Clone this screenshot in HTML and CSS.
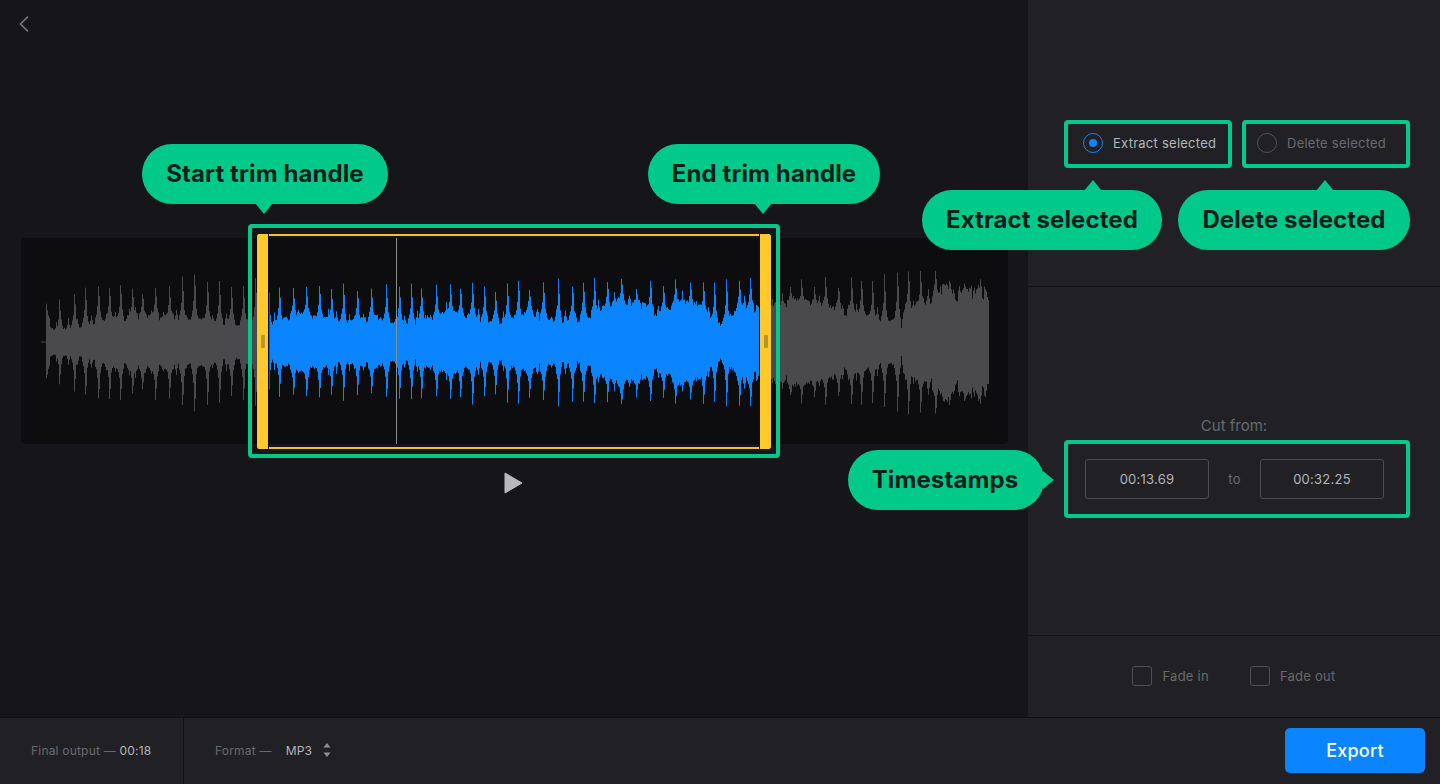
FILE: index.html
```html
<!DOCTYPE html>
<html lang="en">
<head>
    <meta charset="UTF-8">
    <title>Cut audio</title>
    <link rel="stylesheet" href="styles.css">
</head>
<body>
    <div class="app">
        <div class="workspace">
            <main class="editor">
                <a class="back" href="#">
                    <svg width="12" height="18" viewBox="0 0 12 18"><path d="M10 1.500 2.500 9l7.500 7.500"/></svg>
                </a>
                <div class="wave">
                    <svg class="wave-svg" width="987" height="206" viewBox="0 0 987 206">
                        <path id="wave-gray" class="wave-gray"/>
                        <path id="wave-blue" class="wave-blue"/>
                    </svg>
                    <div class="playhead"></div>
                    <div class="selection">
                        <div class="trim">
                            <div class="handle handle-left"><span class="grip"></span></div>
                            <div class="handle handle-right"><span class="grip"></span></div>
                        </div>
                    </div>
                </div>
                <button class="play">
                    <svg width="20" height="24" viewBox="0 0 20 24"><path d="M2 2v20l17-10z"/></svg>
                </button>
            </main>

            <aside class="sidebar">
                <section class="side-modes">
                    <label class="mode mode-on"><span class="radio radio-on"></span>Extract selected</label>
                    <label class="mode mode-off"><span class="radio"></span>Delete selected</label>
                </section>
                <section class="side-cut">
                    <div class="cut-label">Cut from:</div>
                    <div class="cut-box">
                        <div class="time">00:13.69</div>
                        <span class="cut-to">to</span>
                        <div class="time">00:32.25</div>
                    </div>
                </section>
                <section class="side-fade">
                    <label class="fade"><span class="check"></span>Fade in</label>
                    <label class="fade"><span class="check"></span>Fade out</label>
                </section>
            </aside>
        </div>

        <footer class="bottom">
            <div class="output">Final output — <b>00:18</b></div>
            <div class="format">
                <span>Format —</span>
                <b>MP3</b>
                <svg width="8" height="14" viewBox="0 0 8 14"><path d="M4 0 7.500 4.500H.5zM4 14 .5 9.500h7z"/></svg>
            </div>
            <button class="export">Export</button>
        </footer>

        <div class="callout callout-start arrow-down">Start trim handle</div>
        <div class="callout callout-end arrow-down">End trim handle</div>
        <div class="callout callout-extract arrow-up">Extract selected</div>
        <div class="callout callout-delete arrow-up">Delete selected</div>
        <div class="callout callout-stamps arrow-right">Timestamps</div>
    </div>

    <script src="waveform.js"></script>
</body>
</html>
```

FILE: styles.css
```css
* { box-sizing: border-box; }
body { margin: 0; background: #16161a; font-family: Inter, "Liberation Sans", sans-serif; font-size: 13px; letter-spacing: .25px; color: #b5b5b8; overflow: hidden; }
button { font-family: inherit; border: none; padding: 0; }

.app { position: relative; width: 1440px; height: 784px; display: flex; flex-direction: column; }
.workspace { flex: 1; display: flex; min-height: 0; }

/* left side */
.editor { flex: 1; padding: 0 20px 0 21px; display: flex; flex-direction: column; }
.back { display: block; height: 48px; padding-top: 15px; margin-left: -3px; }
.back svg { display: block; fill: none; stroke: #77777b; stroke-width: 1.7; }
.wave { position: relative; height: 206px; margin-top: 190px; background: #0d0d0f; border-radius: 4px; }
.wave-svg { display: block; }
.wave-gray { fill: none; stroke: #4a4a4c; stroke-width: 1; }
.wave-blue { fill: none; stroke: #0a84ff; stroke-width: 1; }
.playhead { position: absolute; left: 375px; top: 0; bottom: 0; width: 1px; background: #8b8b8e; }
.selection { position: absolute; left: 227px; top: -14px; width: 532px; height: 234px; border: 4px solid #00c98a; border-radius: 4px; padding: 6px 5px 5px; }
.trim { height: 100%; display: flex; justify-content: space-between; border-top: 2px solid #f0c030; border-bottom: 2px solid #f0c030; border-radius: 3px; }
.handle { width: 12px; margin: -2px 0; background: #ffca2a; display: flex; align-items: center; justify-content: center; }
.handle-left { border-radius: 3px 0 0 3px; border-right: 1px solid #0d0d0f; }
.handle-right { border-radius: 0 3px 3px 0; border-left: 1px solid #0d0d0f; }
.grip { width: 4px; height: 13px; border-radius: 1px; background: #b8962c; }
.play { align-self: center; margin: 27px 0 0 -3px; background: none; width: 20px; height: 24px; }
.play svg { display: block; fill: #b9b9bb; stroke: #b9b9bb; stroke-width: 1; stroke-linejoin: round; }

/* right side */
.sidebar { width: 412px; background: #212125; display: flex; flex-direction: column; }
.side-modes { height: 287px; padding: 120px 30px 0 36px; display: flex; gap: 10px; border-bottom: 1px solid #141417; }
.mode { width: 168px; height: 48px; border: 4px solid #00c98a; border-radius: 4px; padding: 0 0 2px 15px; display: flex; align-items: center; gap: 10px; color: #69696d; }
.mode-on { color: #b5b5b8; }
.mode-off { padding-left: 11px; }
.radio { width: 20px; height: 20px; border-radius: 50%; border: 1.5px solid #505054; }
.radio-on { border-color: #0a84ff; display: flex; align-items: center; justify-content: center; }
.radio-on::after { content: ""; width: 8px; height: 8px; border-radius: 50%; background: #0a84ff; }

.side-cut { height: 349px; padding: 130px 30px 0 36px; border-bottom: 1px solid #141417; }
.cut-label { height: 17px; margin-bottom: 6px; padding-right: 6px; font-size: 15px; line-height: 17px; letter-spacing: 0; text-align: center; color: #69696d; }
.cut-box { height: 78px; border: 4px solid #00c98a; border-radius: 4px; padding: 0 22px 0 17px; display: flex; align-items: center; justify-content: space-between; }
.time { width: 124px; height: 40px; border: 1px solid #4e4e52; border-radius: 3px; display: flex; align-items: center; justify-content: center; }
.cut-to { color: #69696d; }

.side-fade { flex: 1; display: flex; align-items: center; justify-content: center; gap: 41px; padding-bottom: 1px; color: #69696d; }
.fade { display: flex; align-items: center; gap: 10px; }
.check { width: 20px; height: 20px; border: 1.5px solid #505054; border-radius: 3px; }

/* bottom bar */
.bottom { height: 67px; background: #212125; border-top: 1px solid #111114; display: flex; align-items: center; font-size: 12px; letter-spacing: .2px; color: #69696d; }
.bottom b { font-weight: 400; color: #b5b5b8; }
.output { width: 184px; height: 100%; padding: 0 0 2px 31px; display: flex; align-items: center; white-space: pre; border-right: 1px solid #111114; }
.format { padding: 0 0 2px 31px; display: flex; align-items: center; }
.format b { margin-left: 14px; }
.format svg { margin-left: 11px; fill: #8f8f92; }
.export { margin: 0 15px 1px auto; width: 140px; height: 45px; background: #0a84ff; color: #fff; font-size: 18px; font-weight: 500; letter-spacing: .2px; border-radius: 5px; }

/* callouts on top of the screen */
.callout { position: absolute; height: 60px; border-radius: 30px; background: #00c98a; color: #05211a; font-size: 24px; font-weight: 700; letter-spacing: .1px; line-height: 60px; text-align: center; white-space: nowrap; }
.callout::after { content: ""; position: absolute; background: #00c98a; }
.arrow-down::after { left: 50%; top: 59px; width: 18px; height: 11px; margin-left: -10px; clip-path: polygon(0 0, 100% 0, 50% 100%); }
.arrow-up::after { top: -10px; width: 18px; height: 11px; clip-path: polygon(50% 0, 100% 100%, 0 100%); }
.arrow-right::after { left: 100%; top: 21px; width: 11px; height: 18px; margin-left: -1px; clip-path: polygon(0 0, 100% 50%, 0 100%); }
.callout-start { left: 142px; top: 144px; width: 246px; }
.callout-end { left: 648px; top: 144px; width: 232px; }
.callout-extract { left: 922px; top: 190px; width: 240px; }
.callout-extract::after { left: 162px; }
.callout-delete { left: 1178px; top: 190px; width: 232px; }
.callout-delete::after { left: 138px; }
.callout-stamps { left: 848px; top: 450px; width: 196px; padding-right: 2px; }
```

FILE: waveform.js
```js
// draws the audio wave, one 1px line per column
var seed = 7;
function rnd() {
    seed = (seed * 16807) % 2147483647;
    return seed / 2147483647;
}

// [x on the page, half height]
var body = [[45,24],[50,16],[57,9],[62,12],[80,15],[100,21],[150,26],[170,24],[200,21],[250,18],[270,15],[285,21],[300,28],[320,23],[345,18],[375,24],[396,18],[420,21],[450,28],[480,23],[505,19],[530,30],[555,21],[575,23],[600,30],[622,42],[640,36],[660,27],[680,40],[700,32],[722,16],[745,38],[760,30],[790,40],[820,36],[850,29],[880,22],[897,20],[900,5],[903,28],[920,36],[945,50],[960,46],[985,50],[988,36]];
var peak = [[45,36],[60,40],[85,54],[150,55],[194,66],[270,60],[400,60],[480,58],[530,60],[620,64],[700,60],[760,62],[850,64],[935,74],[988,62]];

function lerp(points, x) {
    for (var i = 1; i < points.length; i++) {
        if (x <= points[i][0]) {
            var a = points[i - 1], b = points[i];
            return a[1] + (b[1] - a[1]) * (x - a[0]) / (b[0] - a[0]);
        }
    }
    return points[points.length - 1][1];
}

var heights = {};
var lump = 1;
for (var x = 46; x <= 988; x++) {
    if (x % 6 === 0) lump = 0.85 + rnd() * 0.32;
    heights[x] = lerp(body, x) * lump * (0.95 + rnd() * 0.1);
}

function addSpike(at, base, tip, spread) {
    spread.forEach(function (s) {
        var px = at + s[0];
        if (heights[px] !== undefined) {
            heights[px] = Math.max(heights[px], base + (tip - base) * s[1]);
        }
    });
}

// big regular spikes
var sx = 46;
while (sx < 988) {
    var base = lerp(body, sx);
    var tip = Math.max(base + 6, lerp(peak, sx) * (0.85 + rnd() * 0.2));
    addSpike(sx, base, tip, [[0, 1], [1, 0.7], [-1, 0.4], [2, 0.25], [-2, 0.2], [3, 0.1], [-3, 0.1]]);
    sx += 10 + Math.round(rnd() * 5);
}

// smaller ones in between
sx = 48;
while (sx < 988) {
    var small = lerp(body, sx);
    addSpike(sx, small, small + 3 + rnd() * 9, [[0, 1], [1, 0.4], [-1, 0.4]]);
    sx += 5 + Math.round(rnd() * 5);
}

var gray = "M20 104H25", blue = "";
var midY = 104;
for (var c = 46; c <= 988; c++) {
    var up = heights[c] * (0.96 + rnd() * 0.08);
    var down = heights[c] * (0.96 + rnd() * 0.08);
    var line = "M" + (c - 21 + 0.5) + " " + (midY - up).toFixed(1) + "V" + (midY + down).toFixed(1);
    if (c >= 270 && c < 760) blue += line;
    else gray += line;
}
document.getElementById("wave-gray").setAttribute("d", gray);
document.getElementById("wave-blue").setAttribute("d", blue);
```
